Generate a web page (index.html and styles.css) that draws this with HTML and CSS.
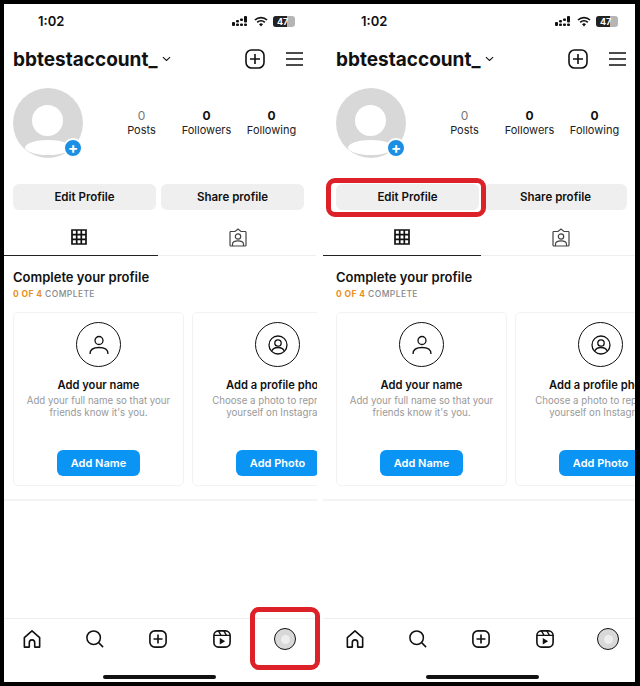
FILE: index.html
```html
<!DOCTYPE html>
<html>
<head>
    <title>Edit Profile steps</title>
    <link rel="stylesheet" href="styles.css">
</head>
<body>
    <div class="shots">
        <div class="phone">
            <div class="status">
                <span class="time">1:02</span>
                <div class="status-icons">
                    <svg width="17" height="11" viewBox="0 0 17 11"><g fill="#111"><rect x="0" y="6" width="3" height="4" rx="1"/><rect x="4" y="4" width="3" height="2.6" rx="1"/><rect x="4" y="7.6" width="3" height="2.4" rx="1"/><rect x="8" y="2.5" width="3" height="2.6" rx="1"/><rect x="8" y="7.6" width="3" height="2.4" rx="1"/><rect x="12" y="0" width="3" height="6.6" rx="1"/><rect x="12" y="7.6" width="3" height="2.4" rx="1"/></g></svg>
                    <svg width="14" height="11" viewBox="0 0 14 11"><path d="M1 4a8.6 8.6 0 0 1 12 0M3.2 6.3a5.4 5.4 0 0 1 7.6 0" fill="none" stroke="#111" stroke-width="1.7"/><path d="M5 8.2a2.8 2.8 0 0 1 4 0L7 10.4z" fill="#111"/></svg>
                    <div class="battery"><span class="battery-fill">47</span></div>
                </div>
            </div>
            <div class="top-bar">
                <span class="username">bbtestaccount_</span>
                <svg class="chevron" width="9" height="6" viewBox="0 0 10 6"><path d="M1 1l4 3.6L9 1" fill="none" stroke="#111" stroke-width="1.2"/></svg>
                <svg class="top-plus" width="20" height="20" viewBox="0 0 20 20"><rect x="1" y="1" width="18" height="18" rx="5.5" fill="none" stroke="#111" stroke-width="1.6"/><path d="M10 5v10M5 10h10" stroke="#111" stroke-width="1.6"/></svg>
                <svg class="menu" width="18" height="14" viewBox="0 0 18 14"><path d="M1 1h17M1 7h17M1 13h17" stroke="#111" stroke-width="1.5"/></svg>
            </div>
            <div class="profile">
                <div class="avatar">
                    <div class="avatar-head"></div>
                    <div class="avatar-body"></div>
                    <div class="avatar-add">+</div>
                </div>
                <div class="stats">
                    <div class="stat"><b class="stat-light">0</b><span>Posts</span></div>
                    <div class="stat"><b>0</b><span>Followers</span></div>
                    <div class="stat"><b>0</b><span>Following</span></div>
                </div>
            </div>
            <div class="actions">
                <div class="action">Edit Profile</div>
                <div class="action">Share profile</div>
            </div>
            <div class="tabs">
                <div class="tab tab-active">
                    <svg width="16" height="16" viewBox="0 0 16 16"><path d="M1 1h14v14H1zM1 5.7h14M1 10.3h14M5.7 1v14M10.3 1v14" fill="none" stroke="#111" stroke-width="1.7"/></svg>
                </div>
                <div class="tab tab-tagged">
                    <svg width="18" height="19" viewBox="0 0 18 19"><g fill="none" stroke="#444" stroke-width="1.2"><path d="M1.500 3.500h4.500L9 1l3 2.500h4.500a1 1 0 0 1 .5 1V17a1 1 0 0 1-1 1H2a1 1 0 0 1-1-1V4.500a1 1 0 0 1 .5-1z"/><circle cx="9" cy="8.500" r="2.700"/><path d="M3.500 18v-2c0-2 2.500-3.200 5.500-3.200s5.500 1.200 5.500 3.200v2"/></g></svg>
                </div>
            </div>
            <div class="complete">
                <h2>Complete your profile</h2>
                <p><span class="complete-count">0 OF 4</span> COMPLETE</p>
            </div>
            <div class="cards">
                <div class="card">
                    <div class="card-icon">
                        <svg width="20" height="20" viewBox="0 0 20 20"><g fill="none" stroke="#111" stroke-width="1.3"><circle cx="10" cy="5.5" r="4"/><path d="M1 19c0-4.500 3.500-6.500 9-6.500s9 2 9 6.500"/></g></svg>
                    </div>
                    <h3>Add your name</h3>
                    <p>Add your full name so that your friends know it's you.</p>
                    <div class="card-button">Add Name</div>
                </div>
                <div class="card">
                    <div class="card-icon">
                        <svg width="20" height="20" viewBox="0 0 20 20"><g fill="none" stroke="#111" stroke-width="1.3"><circle cx="10" cy="10" r="9"/><circle cx="10" cy="8" r="3.2"/><path d="M3.800 16c1-2.500 3.200-3.500 6.200-3.500s5.200 1 6.200 3.500"/></g></svg>
                    </div>
                    <h3>Add a profile photo</h3>
                    <p>Choose a photo to represent yourself on Instagram.</p>
                    <div class="card-button">Add Photo</div>
                </div>
            </div>
            <div class="divider"></div>
            <div class="nav">
                <svg width="18" height="18" viewBox="0 0 20 20"><path d="M1.500 8.500L10 1l8.500 7.500V19h-5.500v-5a3 3 0 0 0-6 0v5H1.500z" fill="none" stroke="#111" stroke-width="1.8" stroke-linejoin="round"/></svg>
                <svg width="18" height="18" viewBox="0 0 20 20"><circle cx="8.500" cy="8.500" r="7.500" fill="none" stroke="#111" stroke-width="1.700"/><path d="M14 14l5 5" stroke="#111" stroke-width="1.700"/></svg>
                <svg width="18" height="18" viewBox="0 0 20 20"><rect x="1" y="1" width="18" height="18" rx="5.500" fill="none" stroke="#111" stroke-width="1.800"/><path d="M10 5v10M5 10h10" stroke="#111" stroke-width="1.800"/></svg>
                <svg width="18" height="18" viewBox="0 0 20 20"><rect x="1" y="1" width="18" height="18" rx="5" fill="none" stroke="#111" stroke-width="1.800"/><path d="M1 6h18M6 1l3 5M12 1l3 5" fill="none" stroke="#111" stroke-width="1.500"/><path d="M7.500 9v7l6-3.500z" fill="#111"/></svg>
                <div class="nav-avatar"><div class="nav-avatar-head"></div></div>
            </div>
            <div class="home-bar"></div>
        </div>
        <div class="phone">
            <div class="status">
                <span class="time">1:02</span>
                <div class="status-icons">
                    <svg width="17" height="11" viewBox="0 0 17 11"><g fill="#111"><rect x="0" y="6" width="3" height="4" rx="1"/><rect x="4" y="4" width="3" height="2.6" rx="1"/><rect x="4" y="7.6" width="3" height="2.4" rx="1"/><rect x="8" y="2.5" width="3" height="2.6" rx="1"/><rect x="8" y="7.6" width="3" height="2.4" rx="1"/><rect x="12" y="0" width="3" height="6.6" rx="1"/><rect x="12" y="7.6" width="3" height="2.4" rx="1"/></g></svg>
                    <svg width="14" height="11" viewBox="0 0 14 11"><path d="M1 4a8.6 8.6 0 0 1 12 0M3.2 6.3a5.4 5.4 0 0 1 7.6 0" fill="none" stroke="#111" stroke-width="1.7"/><path d="M5 8.2a2.8 2.8 0 0 1 4 0L7 10.4z" fill="#111"/></svg>
                    <div class="battery"><span class="battery-fill">47</span></div>
                </div>
            </div>
            <div class="top-bar">
                <span class="username">bbtestaccount_</span>
                <svg class="chevron" width="9" height="6" viewBox="0 0 10 6"><path d="M1 1l4 3.6L9 1" fill="none" stroke="#111" stroke-width="1.2"/></svg>
                <svg class="top-plus" width="20" height="20" viewBox="0 0 20 20"><rect x="1" y="1" width="18" height="18" rx="5.5" fill="none" stroke="#111" stroke-width="1.6"/><path d="M10 5v10M5 10h10" stroke="#111" stroke-width="1.6"/></svg>
                <svg class="menu" width="18" height="14" viewBox="0 0 18 14"><path d="M1 1h17M1 7h17M1 13h17" stroke="#111" stroke-width="1.5"/></svg>
            </div>
            <div class="profile">
                <div class="avatar">
                    <div class="avatar-head"></div>
                    <div class="avatar-body"></div>
                    <div class="avatar-add">+</div>
                </div>
                <div class="stats">
                    <div class="stat"><b class="stat-light">0</b><span>Posts</span></div>
                    <div class="stat"><b>0</b><span>Followers</span></div>
                    <div class="stat"><b>0</b><span>Following</span></div>
                </div>
            </div>
            <div class="actions">
                <div class="action">Edit Profile</div>
                <div class="action">Share profile</div>
            </div>
            <div class="tabs">
                <div class="tab tab-active">
                    <svg width="16" height="16" viewBox="0 0 16 16"><path d="M1 1h14v14H1zM1 5.7h14M1 10.3h14M5.7 1v14M10.3 1v14" fill="none" stroke="#111" stroke-width="1.7"/></svg>
                </div>
                <div class="tab tab-tagged">
                    <svg width="18" height="19" viewBox="0 0 18 19"><g fill="none" stroke="#444" stroke-width="1.2"><path d="M1.500 3.500h4.500L9 1l3 2.500h4.500a1 1 0 0 1 .5 1V17a1 1 0 0 1-1 1H2a1 1 0 0 1-1-1V4.500a1 1 0 0 1 .5-1z"/><circle cx="9" cy="8.500" r="2.700"/><path d="M3.500 18v-2c0-2 2.500-3.200 5.500-3.200s5.500 1.200 5.500 3.200v2"/></g></svg>
                </div>
            </div>
            <div class="complete">
                <h2>Complete your profile</h2>
                <p><span class="complete-count">0 OF 4</span> COMPLETE</p>
            </div>
            <div class="cards">
                <div class="card">
                    <div class="card-icon">
                        <svg width="20" height="20" viewBox="0 0 20 20"><g fill="none" stroke="#111" stroke-width="1.3"><circle cx="10" cy="5.5" r="4"/><path d="M1 19c0-4.500 3.500-6.500 9-6.500s9 2 9 6.500"/></g></svg>
                    </div>
                    <h3>Add your name</h3>
                    <p>Add your full name so that your friends know it's you.</p>
                    <div class="card-button">Add Name</div>
                </div>
                <div class="card">
                    <div class="card-icon">
                        <svg width="20" height="20" viewBox="0 0 20 20"><g fill="none" stroke="#111" stroke-width="1.3"><circle cx="10" cy="10" r="9"/><circle cx="10" cy="8" r="3.2"/><path d="M3.800 16c1-2.500 3.200-3.500 6.200-3.500s5.200 1 6.200 3.500"/></g></svg>
                    </div>
                    <h3>Add a profile photo</h3>
                    <p>Choose a photo to represent yourself on Instagram.</p>
                    <div class="card-button">Add Photo</div>
                </div>
            </div>
            <div class="divider"></div>
            <div class="nav">
                <svg width="18" height="18" viewBox="0 0 20 20"><path d="M1.500 8.500L10 1l8.500 7.500V19h-5.500v-5a3 3 0 0 0-6 0v5H1.500z" fill="none" stroke="#111" stroke-width="1.8" stroke-linejoin="round"/></svg>
                <svg width="18" height="18" viewBox="0 0 20 20"><circle cx="8.500" cy="8.500" r="7.500" fill="none" stroke="#111" stroke-width="1.700"/><path d="M14 14l5 5" stroke="#111" stroke-width="1.700"/></svg>
                <svg width="18" height="18" viewBox="0 0 20 20"><rect x="1" y="1" width="18" height="18" rx="5.500" fill="none" stroke="#111" stroke-width="1.800"/><path d="M10 5v10M5 10h10" stroke="#111" stroke-width="1.800"/></svg>
                <svg width="18" height="18" viewBox="0 0 20 20"><rect x="1" y="1" width="18" height="18" rx="5" fill="none" stroke="#111" stroke-width="1.800"/><path d="M1 6h18M6 1l3 5M12 1l3 5" fill="none" stroke="#111" stroke-width="1.500"/><path d="M7.500 9v7l6-3.500z" fill="#111"/></svg>
                <div class="nav-avatar"><div class="nav-avatar-head"></div></div>
            </div>
            <div class="home-bar"></div>
        </div>
        <div class="mark mark-nav"></div>
        <div class="mark mark-edit"></div>
        <div class="frame"></div>
    </div>
</body>
</html>
```

FILE: styles.css
```css
* {
    margin: 0;
    padding: 0;
    box-sizing: border-box;
    font-family: 'Inter', sans-serif;
}

body {
    background-color: white;
    color: #111;
    width: 640px;
    height: 686px;
    overflow: hidden;
}

.shots {
    position: relative;
    display: flex;
    gap: 5px;
    width: 640px;
    height: 686px;
    overflow: hidden;
}

.frame {
    position: absolute;
    top: 0;
    left: 0;
    width: 640px;
    height: 686px;
    border: solid black;
    border-width: 4px 5px 4px 4px;
}

.mark {
    position: absolute;
    border: 5px solid #dc2129;
}

.mark-nav {
    left: 250px;
    top: 607px;
    width: 70px;
    height: 63px;
    border-radius: 9px;
}

.mark-edit {
    left: 326px;
    top: 178px;
    width: 160px;
    height: 39px;
    border-radius: 9px;
}

.phone {
    flex: none;
    width: 318px;
    height: 686px;
    display: flex;
    flex-direction: column;
}

.status {
    display: flex;
    justify-content: space-between;
    align-items: center;
    height: 22px;
    margin-top: 10px;
    padding: 0 23px 0 38px;
}

.time {
    font-size: 13px;
    font-weight: 600;
}

.status-icons {
    display: flex;
    align-items: center;
    gap: 5px;
}

.battery {
    width: 22px;
    height: 11px;
    border-radius: 3px;
    background: #b5b5b5;
    overflow: hidden;
}

.battery-fill {
    display: block;
    width: 14px;
    height: 11px;
    padding-left: 4px;
    background: #222;
    color: white;
    font-size: 9px;
    font-weight: 700;
    line-height: 11px;
    white-space: nowrap;
}

.top-bar {
    display: flex;
    align-items: center;
    height: 24px;
    margin-top: 15px;
    padding: 0 15px 0 13px;
}

.username {
    font-size: 19px;
    font-weight: 700;
}

.chevron {
    margin-left: 5px;
}

.top-plus {
    margin-left: auto;
}

.menu {
    margin-left: 20px;
}

.profile {
    display: flex;
    margin-top: 17px;
    padding-left: 13px;
}

.avatar {
    position: relative;
    width: 70px;
    height: 70px;
    border-radius: 50%;
    background: #d8d8d8;
}

.avatar-head {
    position: absolute;
    left: 19px;
    top: 17px;
    width: 31px;
    height: 31px;
    border-radius: 50%;
    background: white;
}

.avatar-body {
    position: absolute;
    left: 12px;
    top: 52px;
    width: 46px;
    height: 15px;
    border-radius: 50%;
    background: white;
}

.avatar-add {
    position: absolute;
    left: 50px;
    top: 50px;
    width: 20px;
    height: 20px;
    border: 2px solid white;
    border-radius: 50%;
    background: #1a8fe3;
    color: white;
    font-size: 15px;
    font-weight: 700;
    line-height: 15px;
    text-align: center;
}

.stats {
    display: flex;
    margin-left: 26px;
    padding-top: 20px;
}

.stat {
    display: flex;
    flex-direction: column;
    align-items: center;
    width: 65px;
    font-size: 11px;
    line-height: 15px;
    color: #222;
}

.stat b {
    font-size: 12px;
    font-weight: 700;
    color: #111;
}

.stat .stat-light {
    font-weight: 400;
    color: #777;
}

.actions {
    display: flex;
    gap: 5px;
    margin-top: 26px;
    padding-left: 13px;
}

.action {
    width: 143px;
    height: 26px;
    border-radius: 6px;
    background: #efefef;
    font-size: 11.5px;
    font-weight: 600;
    line-height: 26px;
    text-align: center;
}

.tabs {
    display: flex;
    margin-top: 9px;
}

.tab {
    display: flex;
    justify-content: center;
    align-items: center;
    width: 158px;
    height: 37px;
    border-bottom: 1px solid #eee;
}

.tab-active {
    border-bottom-color: #222;
}

.tab-tagged {
    padding-left: 2px;
}

.complete {
    margin-top: 13px;
    padding-left: 13px;
}

.complete h2 {
    font-size: 13px;
    font-weight: 600;
    line-height: 16px;
}

.complete p {
    margin-top: 4px;
    font-size: 8.5px;
    font-weight: 500;
    line-height: 11px;
    letter-spacing: 0.4px;
    color: #888;
}

.complete-count {
    font-weight: 700;
    color: #e8901f;
}

.cards {
    display: flex;
    gap: 8px;
    margin-top: 12px;
    margin-right: 1px;
    padding-left: 13px;
    overflow: hidden;
}

.card {
    flex: none;
    display: flex;
    flex-direction: column;
    align-items: center;
    width: 171px;
    height: 174px;
    padding-top: 9px;
    border: 1px solid #f2f2f2;
    border-radius: 5px;
}

.card-icon {
    display: flex;
    justify-content: center;
    align-items: center;
    width: 45px;
    height: 45px;
    border: 1.3px solid #111;
    border-radius: 50%;
}

.card h3 {
    margin-top: 10px;
    font-size: 11.2px;
    font-weight: 600;
    line-height: 16px;
    white-space: nowrap;
}

.card p {
    width: 155px;
    margin-top: 2px;
    font-size: 9.7px;
    line-height: 12px;
    text-align: center;
    color: #999;
}

.card-button {
    width: 83px;
    height: 26px;
    margin-top: auto;
    margin-bottom: 9px;
    border-radius: 6px;
    background: #0a95f5;
    color: white;
    font-size: 11px;
    font-weight: 600;
    line-height: 26px;
    text-align: center;
}

.divider {
    height: 2px;
    margin-top: 13px;
    background: #f4f4f4;
}

.nav {
    display: grid;
    grid-template-columns: repeat(5, 1fr);
    justify-items: center;
    align-items: center;
    height: 41px;
    margin-top: 117px;
    padding-right: 1px;
    border-top: 1px solid #eee;
}

.nav-avatar {
    display: flex;
    justify-content: center;
    align-items: center;
    width: 22px;
    height: 22px;
    border: 1px solid #111;
    border-radius: 50%;
    background: #d8d8d8;
}

.nav-avatar-head {
    width: 9px;
    height: 9px;
    border-radius: 50%;
    background: #eee;
}

.home-bar {
    width: 113px;
    height: 4px;
    margin: 16px auto 0;
    border-radius: 2px;
    background: #111;
}
```
